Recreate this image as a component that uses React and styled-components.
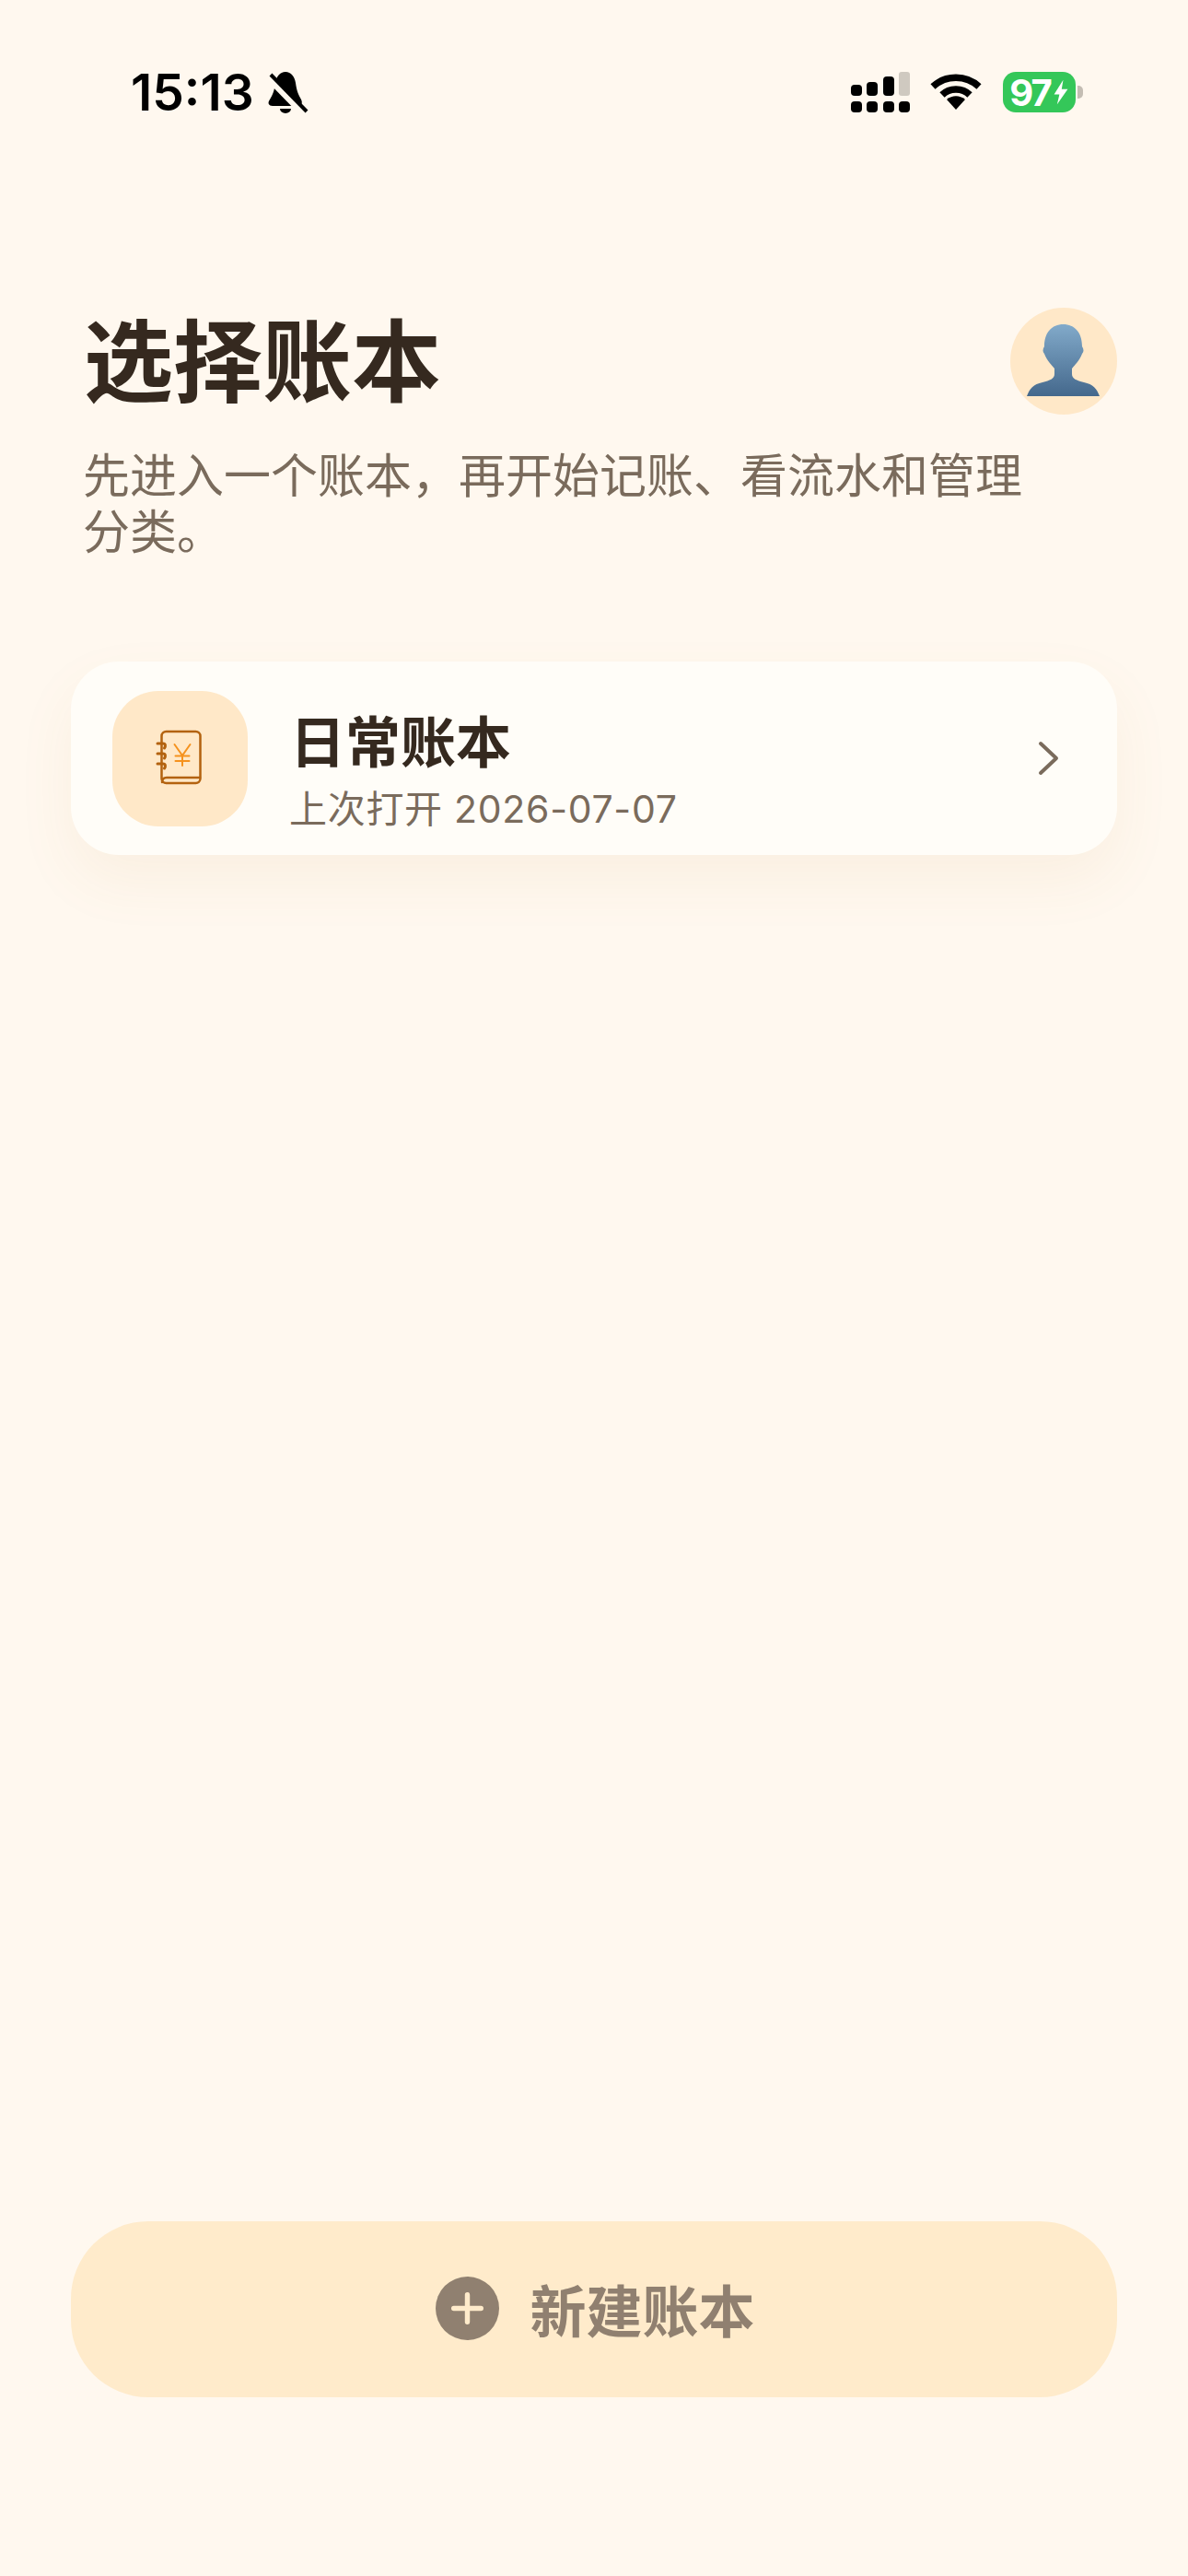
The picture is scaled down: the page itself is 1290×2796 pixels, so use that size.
import React from "react";
import styled, { createGlobalStyle } from "styled-components";

const CJK = `"Noto Sans CJK SC", "Noto Sans", sans-serif`;

const GlobalStyle = createGlobalStyle`
  html, body {
    margin: 0;
    padding: 0;
    background: #fff8ef;
  }
  * {
    box-sizing: border-box;
  }
`;

const Page = styled.div`
  width: 1290px;
  height: 2796px;
  display: flex;
  flex-direction: column;
  padding: 78px 77px 194px;
  background: #fff8ef;
  font-family: ${CJK};
`;

const StatusBar = styled.div`
  display: flex;
  align-items: center;
  height: 44px;
  padding-left: 65px;
`;

const Time = styled.span`
  font-family: Inter, "Liberation Sans", sans-serif;
  font-size: 55px;
  font-weight: 600;
  line-height: 44px;
  color: #000;
`;

const BellIcon = styled.svg`
  width: 48px;
  height: 48px;
  margin-left: 14px;
`;

const StatusRight = styled.div`
  margin-left: auto;
  display: flex;
  align-items: center;
  padding-right: 45px;
`;

const SignalIcon = styled.svg`
  width: 64px;
  height: 44px;
`;

const WifiIcon = styled.svg`
  width: 56px;
  height: 42px;
  margin-left: 22px;
`;

const Battery = styled.div`
  width: 79px;
  height: 44px;
  margin-left: 23px;
  border-radius: 14px;
  background: #34c759;
  display: flex;
  align-items: center;
  justify-content: center;
  gap: 2px;
  color: #fff;
  font-family: Inter, "Liberation Sans", sans-serif;
  font-size: 40px;
  font-weight: 700;
  letter-spacing: -2px;
  position: relative;

  &::after {
    content: "";
    position: absolute;
    right: -8px;
    top: 15px;
    width: 6px;
    height: 14px;
    border-radius: 0 5px 5px 0;
    background: #c4bdb3;
  }
`;

const Header = styled.header`
  display: flex;
  align-items: flex-start;
  justify-content: space-between;
  margin-top: 212px;
  padding-left: 14px;
`;

const Title = styled.h1`
  margin: -6px 0 0;
  font-size: 97px;
  font-weight: 700;
  line-height: 116px;
  color: #35291f;
`;

const Avatar = styled.svg`
  width: 116px;
  height: 116px;
  flex: none;
`;

const Subtitle = styled.p`
  margin: 33px 0 0;
  padding-left: 13px;
  width: 1060px;
  font-size: 51px;
  line-height: 61px;
  color: #7a6b5c;
`;

const BookCard = styled.div`
  margin-top: 113px;
  height: 210px;
  display: flex;
  align-items: center;
  padding: 0 60px 0 45px;
  border-radius: 52px;
  background: #fffdf8;
  box-shadow: 0 28px 64px rgba(190, 130, 60, 0.07);
`;

const BookTile = styled.div`
  width: 147px;
  height: 147px;
  flex: none;
  display: flex;
  align-items: center;
  justify-content: center;
  border-radius: 50px;
  background: #ffe8c8;
`;

const BookIcon = styled.svg`
  width: 52px;
  height: 62px;
  margin: -3px 0 0 -2px;
`;

const BookText = styled.div`
  display: flex;
  flex-direction: column;
  flex: 1;
  margin-left: 45px;
  padding-top: 21px;
`;

const BookName = styled.div`
  padding-left: 1px;
  font-size: 60px;
  font-weight: 700;
  line-height: 76px;
  color: #35291f;
`;

const BookMeta = styled.div`
  margin-top: 13px;
  font-family: Inter, ${CJK};
  font-size: 41px;
  line-height: 50px;
  letter-spacing: 0.7px;
  color: #7a6b5c;
`;

const Chevron = styled.svg`
  width: 28px;
  height: 42px;
  flex: none;
`;

const NewButton = styled.button`
  margin-top: auto;
  height: 191px;
  width: 100%;
  padding: 0 0 3px 3px;
  border: 0;
  border-radius: 84px;
  display: flex;
  align-items: center;
  justify-content: center;
  gap: 33px;
  background: #ffebcb;
  color: #908070;
  font-family: ${CJK};
  font-size: 61px;
  font-weight: 700;
`;

const PlusIcon = styled.svg`
  width: 69px;
  height: 69px;
`;

const App = () => (
  <>
    <GlobalStyle />
    <Page>
      <StatusBar>
        <Time>15:13</Time>
        <BellIcon viewBox="0 0 48 48">
          <path
            d="M20 2C26 2 30 7 31 14C32 22 34 27 37 32C39 36 37 39 34 39H6C2 39 0 36 3 32C6 27 8 22 9 14C10 7 14 2 20 2Z"
            fill="#000"
          />
          <path d="M14 42a6 5 0 0 0 12 0Z" fill="#000" />
          <path d="M1 8L39 47" stroke="#fff8ef" strokeWidth="7" />
          <path d="M4 5L43 45" stroke="#000" strokeWidth="4" />
        </BellIcon>
        <StatusRight>
          <SignalIcon viewBox="0 0 64 44">
            <rect x="0" y="14" width="12" height="12" rx="4" />
            <rect x="0" y="32" width="12" height="12" rx="4" />
            <rect x="17" y="11" width="12" height="15" rx="4" />
            <rect x="17" y="32" width="12" height="12" rx="4" />
            <rect x="35" y="5" width="12" height="21" rx="4" />
            <rect x="35" y="32" width="12" height="12" rx="4" />
            <rect x="52" y="0" width="12" height="26" rx="3" fill="#cfc9c0" />
            <rect x="52" y="32" width="12" height="12" rx="4" />
          </SignalIcon>
          <WifiIcon viewBox="0 0 56 42">
            <path d="M28 40L18 29C24 24 32 24 38 29Z" />
            <path d="M3 15C17 2 39 2 53 15" fill="none" stroke="#000" strokeWidth="7.5" />
            <path d="M13 24C21 16 35 16 43 24" fill="none" stroke="#000" strokeWidth="7.5" />
          </WifiIcon>
          <Battery>
            97
            <svg width="18" height="28" viewBox="0 0 20 34">
              <path d="M13 1L1 20H8L5 33L19 13H11Z" fill="#fff" />
            </svg>
          </Battery>
        </StatusRight>
      </StatusBar>

      <Header>
        <Title>选择账本</Title>
        <Avatar viewBox="0 0 116 116">
          <defs>
            <linearGradient id="person" x1="0" y1="0" x2="0" y2="1">
              <stop offset="0" stopColor="#82aaca" />
              <stop offset="1" stopColor="#44688c" />
            </linearGradient>
          </defs>
          <circle cx="58" cy="58" r="58" fill="#ffe8c8" />
          <path
            d="M57.5 18C70 18 78 27 78 42C80 45 80 48 78 50C75 58 70 62 67 66V72C67 77 72 79 80 81C90 83 94 88 97 96H18C21 88 25 83 35 81C43 79 48 77 48 72V66C45 62 40 58 37 50C35 48 35 45 37 42C37 27 45 18 57.5 18Z"
            fill="url(#person)"
          />
        </Avatar>
      </Header>
      <Subtitle>先进入一个账本，再开始记账、看流水和管理分类。</Subtitle>

      <BookCard>
        <BookTile>
          <BookIcon viewBox="0 0 52 62" fill="none" strokeLinecap="round">
            <g stroke="#b3620f" strokeWidth="2.5">
              <rect x="6.5" y="3" width="42" height="56" rx="5" />
              <path d="M7 58C7 54 9 53 12 53H48" />
              <path d="M2 16H8C11 16 11 19 9.5 21" strokeWidth="3" />
              <path d="M2 27H8C11 27 11 30 9.5 32" strokeWidth="3" />
              <path d="M2 38H8C11 38 11 41 9.5 43" strokeWidth="3" />
            </g>
            <path
              d="M20.5 17L29 29L37.5 17M29 29V40M21.5 29.5H36.5M21.5 35H36.5"
              stroke="#f5921e"
              strokeWidth="2"
            />
          </BookIcon>
        </BookTile>
        <BookText>
          <BookName>日常账本</BookName>
          <BookMeta>上次打开 2026-07-07</BookMeta>
        </BookText>
        <Chevron viewBox="0 0 28 42" fill="none">
          <path d="M5 5L22 21L5 37" stroke="#7a6b5c" strokeWidth="4" strokeLinecap="round" strokeLinejoin="round" />
        </Chevron>
      </BookCard>

      <NewButton>
        <PlusIcon viewBox="0 0 70 70">
          <circle cx="35" cy="35" r="35" fill="#908070" />
          <path d="M35 20V50M20 35H50" stroke="#ffebcb" strokeWidth="5.5" strokeLinecap="round" />
        </PlusIcon>
        新建账本
      </NewButton>
    </Page>
  </>
);

export default App;
